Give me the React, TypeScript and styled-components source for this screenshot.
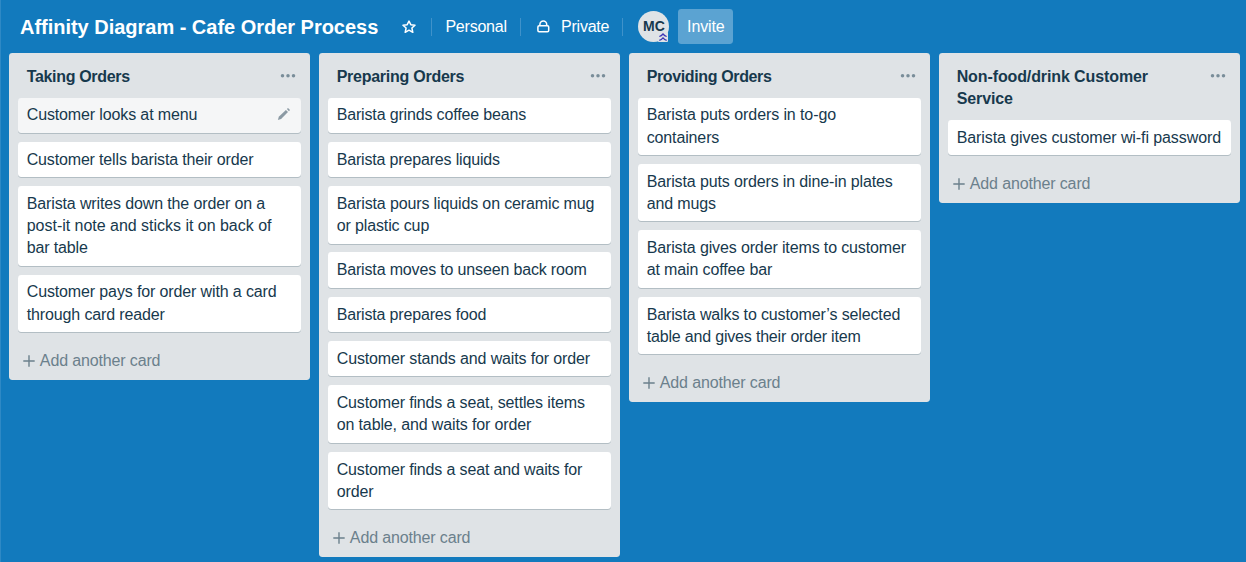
import React from 'react';
import styled, { createGlobalStyle } from 'styled-components';

const GlobalStyle = createGlobalStyle`
  * { box-sizing: border-box; }
  body {
    margin: 0;
    background: #127abd;
    font-family: "Liberation Sans", Arial, sans-serif;
    font-size: 16px;
    line-height: 22.14px;
    color: #17394d;
    overflow: hidden;
  }
`;

const Board = styled.div`
  height: 562px;
  overflow: hidden;
  border-left: 1px solid #2e89c5;
`;

const Header = styled.header`
  display: flex;
  align-items: center;
  height: 53.4px;
  padding-left: 19px;
  color: #fff;
`;

const BoardTitle = styled.h1`
  margin: 0;
  width: 358px;
  font-size: 20px;
  line-height: 28px;
  font-weight: 700;
  letter-spacing: -0.02px;
  white-space: nowrap;
`;

const StarIcon = styled.svg`
  display: block;
  margin-left: 24px;
  flex: none;
`;

const Divider = styled.span<{ $before: number; $after: number }>`
  flex: none;
  width: 1px;
  height: 18px;
  margin-left: ${p => p.$before}px;
  margin-right: ${p => p.$after}px;
  background: #3f92ca;
`;

const HeaderLabel = styled.span<{ $width: number }>`
  flex: none;
  width: ${p => p.$width}px;
  letter-spacing: -0.22px;
  white-space: nowrap;
`;

const LockIcon = styled.svg`
  display: block;
  flex: none;
  margin-right: 11px;
`;

const Avatar = styled.div`
  position: relative;
  flex: none;
  width: 31px;
  height: 31px;
  border-radius: 50%;
  background: #dfe3e6;
  color: #17394d;
  font-size: 14px;
  line-height: 31px;
  font-weight: 700;
  text-align: center;
`;

const RankBadge = styled.svg`
  position: absolute;
  right: 1px;
  bottom: 0;
`;

const InviteButton = styled.button`
  flex: none;
  width: 55px;
  height: 35.4px;
  margin-left: 9px;
  padding: 0;
  border: 0;
  border-radius: 3.4px;
  background: #5ba3d2;
  color: #fff;
  font: inherit;
  letter-spacing: -0.12px;
`;

const Lists = styled.main`
  display: flex;
  align-items: flex-start;
  gap: 8.8px;
  padding-left: 8px;
`;

const List = styled.section`
  flex: none;
  width: 301.2px;
  padding: 0 8.86px;
  border-radius: 3.4px;
  background: #dfe3e6;
`;

const ListHeader = styled.div`
  display: flex;
  justify-content: space-between;
  padding: 12.3px 5px 9.7px 8.86px;
`;

const ListTitle = styled.h2<{ $spacing: number }>`
  margin: 0;
  width: 215px;
  font-size: 16px;
  line-height: 22.14px;
  font-weight: 700;
  letter-spacing: ${p => p.$spacing}px;
`;

const MoreIcon = styled.svg`
  display: block;
  flex: none;
  margin-top: 7px;
`;

const Cards = styled.div`
  display: flex;
  flex-direction: column;
  gap: 8.86px;
`;

const Card = styled.article<{ $hovered?: boolean }>`
  display: flex;
  justify-content: space-between;
  padding: 6.9px 8.86px 6.38px;
  border-radius: 3.4px;
  background: ${p => (p.$hovered ? '#f5f6f7' : '#fff')};
  box-shadow: 0 1px 0 #b3bec4;
`;

const CardText = styled.div`
  white-space: nowrap;
`;

const CardLine = styled.span<{ $spacing: number }>`
  display: block;
  letter-spacing: ${p => p.$spacing}px;
`;

const EditIcon = styled.svg`
  display: block;
  flex: none;
  margin: 3px 1px 0 0;
`;

const AddCard = styled.div`
  display: flex;
  align-items: center;
  height: 48.2px;
  padding: 9px 0 0 5px;
  color: #6b808c;
  letter-spacing: -0.14px;
`;

const PlusIcon = styled.svg`
  display: block;
  flex: none;
  margin-right: 5px;
`;

const DEFAULT_SPACING = -0.13;

type Line = string | [text: string, spacing: number];

const lists: { title: string; spacing: number; cards: Line[][] }[] = [
  {
    title: 'Taking Orders',
    spacing: -0.33,
    cards: [
      ['Customer looks at menu'],
      [['Customer tells barista their order', -0.16]],
      ['Barista writes down the order on a', ['post-it note and sticks it on back of', -0.02], 'bar table'],
      ['Customer pays for order with a card', 'through card reader'],
    ],
  },
  {
    title: 'Preparing Orders',
    spacing: -0.26,
    cards: [
      [['Barista grinds coffee beans', -0.16]],
      [['Barista prepares liquids', -0.17]],
      ['Barista pours liquids on ceramic mug', 'or plastic cup'],
      [['Barista moves to unseen back room', -0.16]],
      [['Barista prepares food', -0.17]],
      ['Customer stands and waits for order'],
      [['Customer finds a seat, settles items', -0.15], 'on table, and waits for order'],
      [['Customer finds a seat and waits for', -0.15], 'order'],
    ],
  },
  {
    title: 'Providing Orders',
    spacing: -0.37,
    cards: [
      [['Barista puts orders in to-go', -0.1], 'containers'],
      ['Barista puts orders in dine-in plates', 'and mugs'],
      ['Barista gives order items to customer', 'at main coffee bar'],
      ['Barista walks to customer’s selected', ['table and gives their order item', -0.18]],
    ],
  },
  {
    title: 'Non-food/drink Customer Service',
    spacing: -0.11,
    cards: [[['Barista gives customer wi-fi password', -0.09]]],
  },
];

export default function App() {
  return (
    <>
      <GlobalStyle />
      <Board>
        <Header>
          <BoardTitle>Affinity Diagram - Cafe Order Process</BoardTitle>
          <StarIcon width="14" height="14" viewBox="0 0 14 14" fill="none" stroke="#fff" strokeWidth="1.5" strokeLinejoin="round">
            <path d="M7 1.1 8.8 4.7 13 5.2 9.9 8 10.8 12.3 7 10.2 3.2 12.3 4.1 8 1 5.2 5.2 4.7Z" />
          </StarIcon>
          <Divider $before={15} $after={13.4} />
          <HeaderLabel $width={61}>Personal</HeaderLabel>
          <Divider $before={13.6} $after={16} />
          <LockIcon width="13" height="13" viewBox="0 0 13 13" fill="none" stroke="#fff" strokeWidth="1.5">
            <rect x="0.9" y="5.8" width="10.8" height="6" rx="1.2" />
            <path d="M2.9 5.8V4.4a3.4 3.4 0 0 1 6.8 0V5.8" />
          </LockIcon>
          <HeaderLabel $width={48}>Private</HeaderLabel>
          <Divider $before={13} $after={15.4} />
          <Avatar>
            MC
            <RankBadge width="10" height="10" viewBox="0 0 10 10">
              <rect width="10" height="10" rx="1" fill="#dfe3e6" />
              <path d="M1.3 4.5C3 4 4 3.2 5 2 6 3.2 7 4 8.7 4.5M1.3 8.3C3 7.8 4 7 5 5.8 6 7 7 7.8 8.7 8.3" fill="none" stroke="#3d35b5" strokeWidth="1.3" />
            </RankBadge>
          </Avatar>
          <InviteButton>Invite</InviteButton>
        </Header>
        <Lists>
          {lists.map((list, l) => (
            <List key={list.title}>
              <ListHeader>
                <ListTitle $spacing={list.spacing}>{list.title}</ListTitle>
                <MoreIcon width="16" height="5" viewBox="0 0 16 5" fill="#798d99">
                  <circle cx="2.5" cy="2.8" r="1.75" />
                  <circle cx="8" cy="2.8" r="1.75" />
                  <circle cx="13.5" cy="2.8" r="1.75" />
                </MoreIcon>
              </ListHeader>
              <Cards>
                {list.cards.map((lines, c) => (
                  <Card key={c} $hovered={l === 0 && c === 0}>
                    <CardText>
                      {lines.map((line, i) => {
                        const [text, spacing] = typeof line === 'string' ? [line, DEFAULT_SPACING] : line;
                        return (
                          <CardLine key={i} $spacing={spacing}>
                            {text}
                          </CardLine>
                        );
                      })}
                    </CardText>
                    {l === 0 && c === 0 && (
                      <EditIcon width="14" height="14" viewBox="0 0 14 14" fill="#8b9aa4">
                        <path d="M0.9 13 1.8 9.8 8.9 3 11 5.1 4.1 12.1Z" />
                        <path d="M9.9 2.1 11 1.1 13 3.1 11.9 4.2Z" />
                      </EditIcon>
                    )}
                  </Card>
                ))}
              </Cards>
              <AddCard>
                <PlusIcon width="12" height="12" viewBox="0 0 12 12" stroke="#6b808c" strokeWidth="1.4">
                  <path d="M6 0.3V11.7M0.3 6H11.7" />
                </PlusIcon>
                Add another card
              </AddCard>
            </List>
          ))}
        </Lists>
      </Board>
    </>
  );
}
